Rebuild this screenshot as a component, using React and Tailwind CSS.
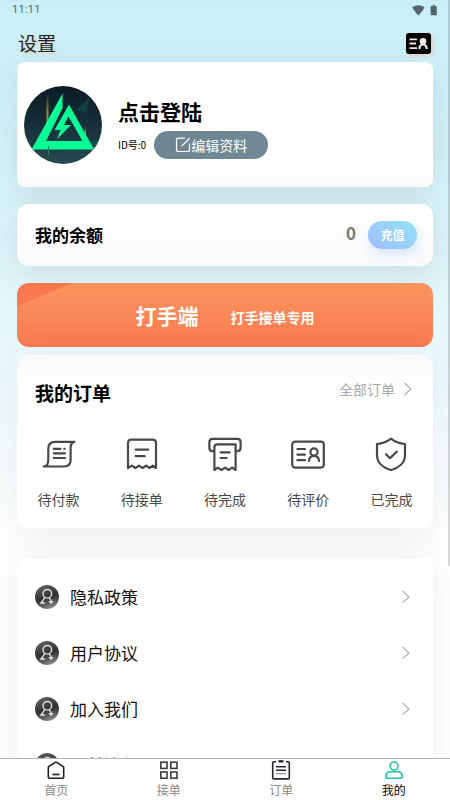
const orderStates = [
  { label: '待付款', icon: ScrollIcon },
  { label: '待接单', icon: ReceiptIcon },
  { label: '待完成', icon: PrinterIcon },
  { label: '待评价', icon: IdCardIcon },
  { label: '已完成', icon: ShieldIcon },
]

const menuItems = ['隐私政策', '用户协议', '加入我们', '下单流程']

const tabs = [
  { label: '首页', icon: HomeIcon },
  { label: '接单', icon: GridIcon },
  { label: '订单', icon: ClipboardIcon },
  { label: '我的', icon: UserIcon, active: true },
]

function LineIcon({ children }) {
  return (
    <svg
      viewBox="0 0 34 34"
      className="w-[34px] h-[34px]"
      fill="none"
      stroke="#484848"
      strokeWidth="2.2"
      strokeLinecap="round"
      strokeLinejoin="round"
      aria-hidden="true"
    >
      {children}
    </svg>
  )
}

function ScrollIcon() {
  return (
    <LineIcon>
      <path d="M32.5 4.8H13Q6.3 4.8 6.3 11.5V23Q6.3 29.5 1.6 29.5H22Q28.6 29.5 28.6 23V10.5Q28.6 5.6 32.5 4.8" />
      <path d="M11.8 11.8H18.5M22.3 11.8H22.6M11.8 16.3H23M11.8 21H23" />
    </LineIcon>
  )
}

function ReceiptIcon() {
  return (
    <LineIcon>
      <path d="M3 31V6Q3 2.6 6.4 2.6H27.6Q31 2.6 31 6V31L27.8 28.6 24.6 31 21.1 28.6 17.6 31 14 28.6 10.4 31 6.8 28.6Z" />
      <path d="M10.7 12.6H23.3M10.7 19.2H19.7" />
    </LineIcon>
  )
}

function PrinterIcon() {
  return (
    <LineIcon>
      <path d="M5.8 14.2H4.6Q1.4 14.2 1.4 11V5Q1.4 1.8 4.6 1.8H29.4Q32.6 1.8 32.6 5V11Q32.6 14.2 29.4 14.2H28.2" />
      <path d="M6.4 33V10.4Q6.4 7.4 9.4 7.4H27.6V33L24.2 30.6 20.6 33 17 30.6 13.4 33 9.9 30.6Z" />
      <path d="M12.6 15.4H21.6M12.6 21H18.6" />
    </LineIcon>
  )
}

function IdCardIcon() {
  return (
    <LineIcon>
      <rect x="1.2" y="4.6" width="31.6" height="26" rx="3" />
      <path d="M6.4 12H14M6.4 17.6H14M6.4 23.2H14" />
      <circle cx="23" cy="15" r="3.6" />
      <path d="M18 24Q18.2 18.8 23 18.8T28 24" />
    </LineIcon>
  )
}

function ShieldIcon() {
  return (
    <LineIcon>
      <path d="M17 1.6C21 4.8 26 6.4 31 7V18C31 26 24.5 31 17 33C9.5 31 3 26 3 18V7C8 6.4 13 4.8 17 1.6Z" />
      <path d="M12 17.2L16 21.2 22.8 14.6" />
    </LineIcon>
  )
}

function HomeIcon() {
  return (
    <svg viewBox="0 0 20 20" className="w-5 h-5" fill="none" stroke="#1f1f1f" strokeWidth="1.6" aria-hidden="true">
      <path d="M3.6 18.2Q2.3 18.2 2.3 17V7.6Q2.3 6.9 3 6.4L9.3 2.4Q10 2 10.7 2.4L17 6.4Q17.7 6.9 17.7 7.6V17Q17.7 18.2 16.4 18.2Z" />
      <path d="M6.5 14.5H13.5" />
    </svg>
  )
}

function GridIcon() {
  return (
    <svg viewBox="0 0 20 20" className="w-5 h-5" fill="none" stroke="#3d3d3d" strokeWidth="1.6" aria-hidden="true">
      <rect x="1.8" y="2.2" width="6.2" height="6.2" />
      <rect x="11.8" y="2.2" width="6.2" height="6.2" />
      <rect x="1.8" y="12" width="6.2" height="6.2" />
      <rect x="11.8" y="12" width="6.2" height="6.2" />
    </svg>
  )
}

function ClipboardIcon() {
  return (
    <svg viewBox="0 0 20 20" className="w-5 h-5" fill="none" stroke="#25253a" strokeWidth="1.6" aria-hidden="true">
      <path d="M5 1.8H2.8Q1.7 1.8 1.7 2.9V17.8Q1.7 18.9 2.8 18.9H17.2Q18.3 18.9 18.3 17.8V2.9Q18.3 1.8 17.2 1.8H15" />
      <path d="M7.5 1.3H12.5" strokeWidth="2.4" />
      <path d="M5 6.8H15M5 10.3H15" />
      <path d="M5 13.7H15" strokeWidth="1" stroke="#77778a" />
    </svg>
  )
}

function UserIcon() {
  return (
    <svg viewBox="0 0 20 20" className="w-5 h-5" fill="none" stroke="#22c9a0" strokeWidth="1.6" aria-hidden="true">
      <circle cx="10" cy="6" r="4" />
      <path d="M6.5 11.8H13.5Q18.2 11.8 18.2 16.4Q18.2 18.2 16.4 18.2H3.6Q1.8 18.2 1.8 16.4Q1.8 11.8 6.5 11.8Z" />
    </svg>
  )
}

function ArrowIcon() {
  return (
    <svg viewBox="0 0 10 16" className="w-[10px] h-4" fill="none" stroke="#b0b0b0" strokeWidth="1.2" aria-hidden="true">
      <path d="M1.5 2L8 8 1.5 14" />
    </svg>
  )
}

function EditIcon() {
  return (
    <svg viewBox="0 0 16 16" className="w-4 h-4" fill="none" stroke="white" strokeWidth="1.2" strokeLinecap="round" aria-hidden="true">
      <path d="M9.5 1.2H3.5Q1.5 1.2 1.5 3.2V12.5Q1.5 14.5 3.5 14.5H12.5Q14.5 14.5 14.5 12.5V7M7 8.8L14.3 1.5" />
    </svg>
  )
}

function ContactCardIcon() {
  return (
    <svg viewBox="0 0 25 21" className="w-[25px] h-[21px] drop-shadow-[2px_2px_2px_rgba(240,190,175,0.7)]" aria-hidden="true">
      <rect width="25" height="21" rx="3" fill="black" />
      <path d="M3.5 6.3H11M3.5 10.5H10M3.5 15.2H11" stroke="#f4e6e2" strokeWidth="1.8" />
      <circle cx="17" cy="8.3" r="3.3" fill="#f4e6e2" />
      <path d="M13.4 16Q13.6 11.5 17 11.5T20.8 16" stroke="#f4e6e2" strokeWidth="2.2" fill="none" />
    </svg>
  )
}

function StatusIcons() {
  return (
    <svg viewBox="0 0 26 12" className="w-[26px] h-3" fill="#566469" aria-hidden="true">
      <path d="M0.4 3Q6.4 -0.6 12.4 3Q12.3 5 6.4 11.5Q0.5 5 0.4 3Z" />
      <path d="M18.6 3Q18.6 2 19.6 2H23.8Q24.8 2 24.8 3V10.5Q24.8 11.3 24 11.3H19.4Q18.6 11.3 18.6 10.5Z" />
      <path d="M20.3 0.5H23V2H20.3Z" opacity="0.6" />
    </svg>
  )
}

function Avatar() {
  return (
    <svg viewBox="0 0 78 78" className="w-[78px] h-[78px] shrink-0" aria-hidden="true">
      <defs>
        <linearGradient id="night" x1="0" y1="0" x2="0" y2="1">
          <stop offset="0" stopColor="#0b1b25" />
          <stop offset="0.5" stopColor="#172e39" />
          <stop offset="1" stopColor="#294a51" />
        </linearGradient>
        <linearGradient id="spark" x1="0" y1="0" x2="0" y2="1">
          <stop offset="0" stopColor="#a08a30" stopOpacity="0" />
          <stop offset="0.5" stopColor="#a08a30" />
          <stop offset="1" stopColor="#55b040" />
        </linearGradient>
        <clipPath id="disc">
          <circle cx="39" cy="39" r="39" />
        </clipPath>
      </defs>
      <g clipPath="url(#disc)">
        <rect width="78" height="78" fill="url(#night)" />
        <path d="M22.5 8H24.5V44H22.5Z" fill="url(#spark)" />
        <path d="M60.5 40H62V52H60.5Z" fill="url(#spark)" />
        <path d="M52 24L66 11 62 27Z" fill="#0e5549" opacity="0.6" />
        <path d="M60 58L76 53V62Z" fill="#0e5549" />
        {/* open triangle whose left leg ends in the bolt */}
        <path
          d="M38.5 7.5V22L22 55H58.5L44.5 30.5 40 39H47L33 53 36.5 44H30.5L45 18.5 70 63.5H7.5Z"
          fill="#08ff96"
        />
        <path d="M24.5 60V69" stroke="#158c55" />
      </g>
    </svg>
  )
}

function MenuBadge() {
  return (
    <svg viewBox="0 0 24 24" className="w-6 h-6" fill="none" strokeLinecap="round" aria-hidden="true">
      <defs>
        <linearGradient id="badge" x1="0.3" y1="0" x2="0.6" y2="1">
          <stop offset="0" stopColor="#606060" />
          <stop offset="0.55" stopColor="#303030" />
          <stop offset="1" stopColor="#8a8a8a" />
        </linearGradient>
      </defs>
      <circle cx="12" cy="12" r="12" fill="url(#badge)" />
      <g stroke="#e2e2e2" strokeWidth="1.4">
        <circle cx="12.3" cy="8.8" r="4.3" />
        <path d="M9.8 12.6L6 18H9.5M14 12.8L15 14.2" />
        <path d="M16 15V18.4M14.3 16.7H17.7" />
      </g>
    </svg>
  )
}

export default function App() {
  return (
    <div className="relative h-dvh flex flex-col overflow-hidden bg-white text-black font-['Noto_Sans_CJK_SC','Noto_Sans',sans-serif]">
      <main className="flex-1 min-h-0 overflow-hidden px-[17px] bg-linear-to-b from-[#c8eff7] from-0% via-[#def5fa] via-35% to-white to-70%">
        {/* Status bar */}
        <div className="flex items-center justify-between h-5 -mx-[5px]">
          <span className="font-[Roboto] text-[11px] leading-5 tracking-wide text-[#59686c]">11:11</span>
          <StatusIcons />
        </div>

        <header className="flex items-center justify-between h-[42px] pt-1">
          <h1 className="pl-px text-[19px] leading-7 text-[#222222] [text-shadow:2px_2px_3px_rgba(240,190,175,0.6)]">设置</h1>
          <button type="button" aria-label="名片" className="mr-[2px]">
            <ContactCardIcon />
          </button>
        </header>

        {/* Profile */}
        <section className="flex items-center h-[125px] pl-[7px] rounded-lg bg-linear-to-b from-white from-70% to-[#fcfcfc] shadow-[0_8px_34px_rgba(100,110,115,0.16)]">
          <Avatar />
          <div className="ml-4 pt-[6px]">
            <h2 className="text-[21px] leading-7 font-bold">点击登陆</h2>
            <div className="flex items-center gap-2 mt-[6px]">
              <span className="text-[10px] leading-4">ID号:0</span>
              <button
                type="button"
                className="flex items-center justify-center w-[114px] h-7 rounded-full bg-linear-to-r from-[#6c8590] to-[#708995] text-white text-sm"
              >
                <EditIcon />
                编辑资料
              </button>
            </div>
          </div>
        </section>

        {/* Balance */}
        <section className="flex items-center h-[62px] mt-[17px] pl-[18px] pr-4 rounded-xl bg-linear-to-b from-white to-[#fafafa] shadow-[0_8px_34px_rgba(100,110,115,0.16)]">
          <h2 className="flex-1 text-[17px] leading-6 font-bold">我的余额</h2>
          <span className="mr-3 mb-1 text-[17px] leading-6 font-bold text-[#777777]">0</span>
          <button
            type="button"
            className="w-[49px] h-7 rounded-full bg-linear-to-tr from-[#9fbcff] to-[#93e2f3] text-white text-xs font-bold shadow-[2px_5px_12px_rgba(140,190,250,0.35)]"
          >
            充值
          </button>
        </section>

        {/* Worker entrance */}
        <a
          href="#worker"
          className="flex items-center justify-center gap-8 h-16 mt-[17px] rounded-xl bg-[linear-gradient(157deg,#f97850_0_21px,transparent_22px),linear-gradient(to_bottom,#fa955f,#f87950)] text-white font-bold"
        >
          <span className="text-[21px] leading-7">打手端</span>
          <span className="text-sm leading-5 mt-1">打手接单专用</span>
        </a>

        {/* Orders */}
        <section className="h-[173px] mt-2 pt-6 rounded-xl bg-linear-to-b from-[#fafafa] to-white to-30% shadow-[0_8px_34px_rgba(100,110,115,0.1)]">
          <div className="flex items-start justify-between pl-[18px] pr-5">
            <h2 className="text-[19px] leading-7 font-bold">我的订单</h2>
            <a href="#orders" className="flex items-center gap-2 text-sm leading-5 text-[#aaaaaa]">
              全部订单
              <ArrowIcon />
            </a>
          </div>
          <div className="grid grid-cols-5 mt-[30px]">
            {orderStates.map(({ label, icon: Icon }) => (
              <button key={label} type="button" className="flex flex-col items-center gap-[18px] text-sm leading-5 text-[#484848]">
                <Icon />
                {label}
              </button>
            ))}
          </div>
        </section>

        {/* Menu */}
        <section className="mt-[30px] pt-[11px] rounded-lg bg-white shadow-[0_0_34px_rgba(100,110,115,0.1)]">
          {menuItems.map((label) => (
            <a key={label} href="#menu" className="flex items-center h-14 pl-[18px] pr-[22px] text-[17px] leading-6 text-[#111111]">
              <MenuBadge />
              <span className="flex-1 ml-[11px]">{label}</span>
              <ArrowIcon />
            </a>
          ))}
        </section>
      </main>

      {/* Scroll indicator */}
      <div className="absolute right-0 top-0 w-[2px] h-[566px] bg-black/15" />

      {/* Tab bar */}
      <nav className="grid grid-cols-4 h-[42px] border-t border-[#b5b5b5] bg-white">
        {tabs.map(({ label, icon: Icon, active }) => (
          <a
            key={label}
            href="#tab"
            className={`flex flex-col items-center pt-px text-xs leading-5 ${active ? 'text-black' : 'text-[#888888]'}`}
          >
            <Icon />
            {label}
          </a>
        ))}
      </nav>
    </div>
  )
}
